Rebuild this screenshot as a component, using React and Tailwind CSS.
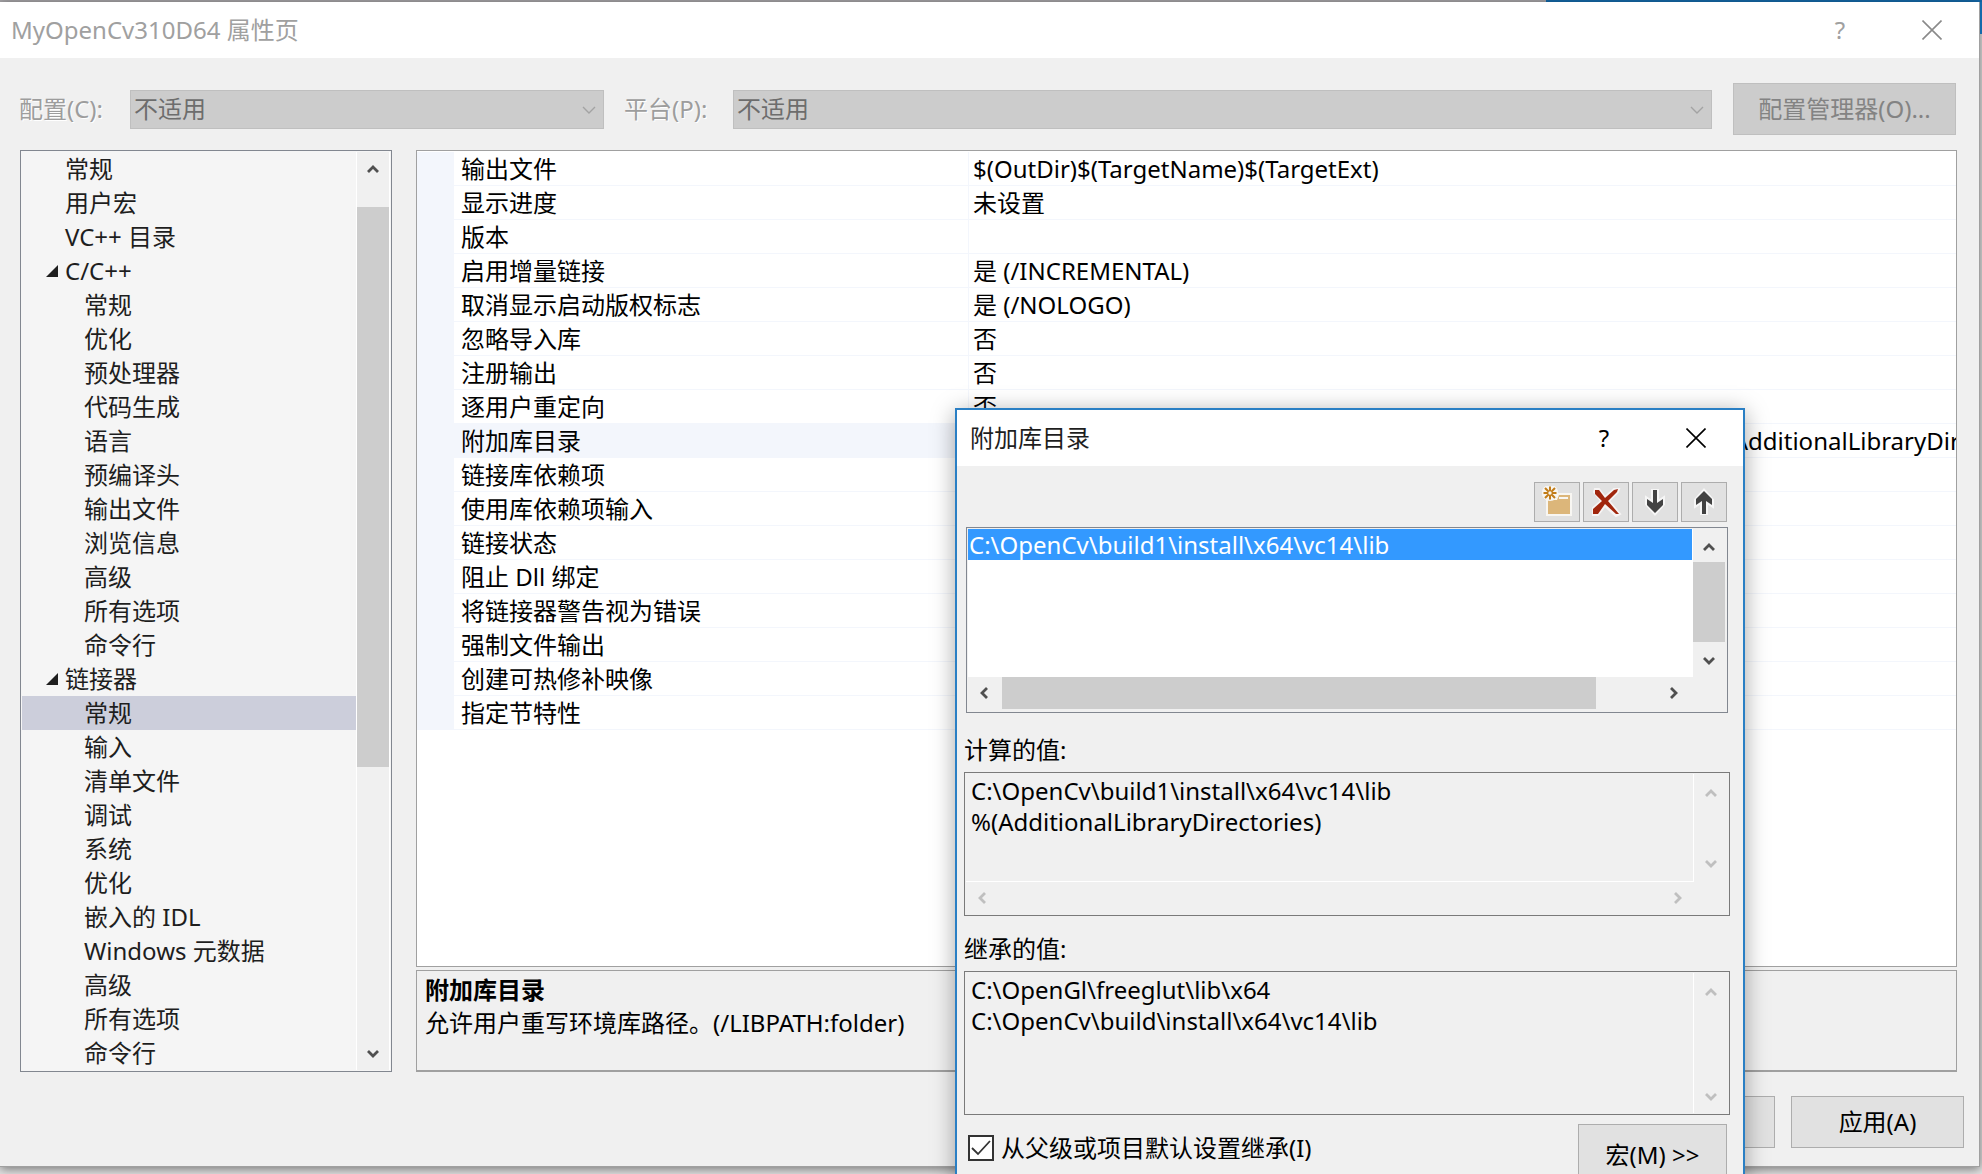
import { useState } from 'react';
import clsx from 'clsx';

const treeItems = [
  { label: '常规', level: 1 },
  { label: '用户宏', level: 1 },
  { label: 'VC++ 目录', level: 1 },
  { label: 'C/C++', level: 1, expanded: true },
  { label: '常规', level: 2 },
  { label: '优化', level: 2 },
  { label: '预处理器', level: 2 },
  { label: '代码生成', level: 2 },
  { label: '语言', level: 2 },
  { label: '预编译头', level: 2 },
  { label: '输出文件', level: 2 },
  { label: '浏览信息', level: 2 },
  { label: '高级', level: 2 },
  { label: '所有选项', level: 2 },
  { label: '命令行', level: 2 },
  { label: '链接器', level: 1, expanded: true },
  { label: '常规', level: 2, selected: true },
  { label: '输入', level: 2 },
  { label: '清单文件', level: 2 },
  { label: '调试', level: 2 },
  { label: '系统', level: 2 },
  { label: '优化', level: 2 },
  { label: '嵌入的 IDL', level: 2 },
  { label: 'Windows 元数据', level: 2 },
  { label: '高级', level: 2 },
  { label: '所有选项', level: 2 },
  { label: '命令行', level: 2 },
];

const properties = [
  { name: '输出文件', value: '$(OutDir)$(TargetName)$(TargetExt)' },
  { name: '显示进度', value: '未设置' },
  { name: '版本', value: '' },
  { name: '启用增量链接', value: '是 (/INCREMENTAL)' },
  { name: '取消显示启动版权标志', value: '是 (/NOLOGO)' },
  { name: '忽略导入库', value: '否' },
  { name: '注册输出', value: '否' },
  { name: '逐用户重定向', value: '否' },
  {
    name: '附加库目录',
    value: 'C:\\OpenCv\\build1\\install\\x64\\vc14\\lib;C:\\OpenGl\\freeglut\\lib\\x64;%(AdditionalLibraryDirectories)',
    active: true,
  },
  { name: '链接库依赖项', value: '' },
  { name: '使用库依赖项输入', value: '' },
  { name: '链接状态', value: '' },
  { name: '阻止 Dll 绑定', value: '' },
  { name: '将链接器警告视为错误', value: '' },
  { name: '强制文件输出', value: '' },
  { name: '创建可热修补映像', value: '' },
  { name: '指定节特性', value: '' },
];

const arrowPaths = {
  up: 'M1 10 L6 5 L11 10',
  down: 'M1 3 L6 8 L11 3',
  left: 'M9 1 L4 6 L9 11',
  right: 'M3 1 L8 6 L3 11',
};

const ScrollArrow = ({ dir, label, disabled }) => (
  <button
    type="button"
    aria-label={label}
    disabled={disabled}
    className={clsx('flex size-8 shrink-0 items-center justify-center', disabled ? 'text-[#bfbfbf]' : 'text-[#505050]')}
  >
    <svg viewBox="0 0 12 12" width="12" height="12" fill="none" stroke="currentColor" strokeWidth="2.8">
      <path d={arrowPaths[dir]} />
    </svg>
  </button>
);

const ThinChevron = () => (
  <svg
    viewBox="0 0 14 8"
    width="14"
    height="8"
    fill="none"
    stroke="#a3a3a3"
    strokeWidth="1.4"
    className="pointer-events-none absolute top-4 right-2"
  >
    <path d="M1 1 L7 7 L13 1" />
  </svg>
);

const CloseIcon = () => (
  <svg viewBox="0 0 20 20" width="20" height="20" fill="none" stroke="currentColor" strokeWidth="1.6">
    <path d="M0.5 0.5 L19.5 19.5 M19.5 0.5 L0.5 19.5" />
  </svg>
);

const NewFolderIcon = () => (
  <svg viewBox="0 0 32 32" width="32" height="32">
    <path d="M5 12 H16 V7 H31 V30 H5 Z" fill="#f8f6f2" />
    <circle cx="9" cy="7" r="8" fill="#f8f6f2" />
    <path d="M7 14 H16 L18 9 H29 V28 H7 Z" fill="#dcb67a" />
    <path d="M18 12 H27" stroke="#f8f6f2" strokeWidth="2" />
    <circle cx="9" cy="7" r="8" fill="#f8f6f2" />
    <path
      d="M9 0.5 V4.5 M9 9.5 V13.5 M2.5 7 H6.5 M11.5 7 H15.5 M4 2 L7 5 M14 2 L11 5 M4 12 L7 9 M14 12 L11 9"
      stroke="#c27d1a"
      strokeWidth="2"
    />
    <circle cx="9" cy="7" r="2.4" fill="none" stroke="#c27d1a" strokeWidth="1.4" />
  </svg>
);

const DeleteIcon = () => (
  <svg viewBox="0 0 32 32" width="32" height="32">
    <path
      d="M5 3 L9 3 L15 11 L24 3 L29 3 L28 6 L19 15 L30 28 L26 30 L15 20 L8 29 L3 29 L3 22 L11 15 L4 6 Z"
      fill="#f6f4f4"
      stroke="#f6f4f4"
      strokeWidth="2"
    />
    <path d="M5 4 L9 4 L15 12 L24 4 L28 3 L27 6 L18 15 L29 28 L26 28 L15 18 L8 28 L3 28 L3 23 L12 15 L5 8 Z" fill="#a1260d" />
  </svg>
);

const MoveIcon = ({ up }) => (
  <svg viewBox="0 0 32 32" width="32" height="32" className={up ? 'rotate-180' : ''}>
    <path
      d="M14 5 H18 V17 L24 13 V18 L16 27 L8 18 V13 L14 17 Z"
      fill="#f6f6f6"
      stroke="#f6f6f6"
      strokeWidth="4"
    />
    <path d="M14 4 H18 V17 L24 13 V19 L16 27 L8 19 V13 L14 17 Z" fill="#424242" />
  </svg>
);

const toolButtons = [
  { label: '新行', icon: <NewFolderIcon /> },
  { label: '删除', icon: <DeleteIcon /> },
  { label: '下移', icon: <MoveIcon /> },
  { label: '上移', icon: <MoveIcon up /> },
];

function DisabledSelect({ id, className }) {
  return (
    <div className={clsx('relative', className)}>
      <select
        id={id}
        disabled
        className="h-[39px] w-full appearance-none border border-[#bfbfbf] bg-[#cccccc] pl-[3px] text-[#6d6d6d] opacity-100"
      >
        <option>不适用</option>
      </select>
      <ThinChevron />
    </div>
  );
}

function ConfigBar() {
  return (
    <div className="flex items-center pr-[23px] pl-[19px]">
      <label htmlFor="config" className="w-[111px] text-[#9d9d9d] [text-shadow:1px_1px_0_#fff]">
        配置(C):
      </label>
      <DisabledSelect id="config" className="w-[474px]" />
      <label htmlFor="platform" className="ml-5 w-[109px] text-[#9d9d9d] [text-shadow:1px_1px_0_#fff]">
        平台(P):
      </label>
      <DisabledSelect id="platform" className="min-w-0 flex-1" />
      <button
        type="button"
        disabled
        className="ml-[21px] h-[52px] w-[223px] border border-[#bfbfbf] bg-[#cccccc] text-[#838383]"
      >
        配置管理器(O)...
      </button>
    </div>
  );
}

function PageTree() {
  return (
    <nav className="flex w-[372px] shrink-0 border border-[#828790] bg-[#f5f5f5] p-px" aria-label="属性页">
      <ul role="tree" className="min-w-0 flex-1 text-[#1e1e1e]">
        {treeItems.map((item, i) => (
          <li
            key={i}
            role="treeitem"
            aria-level={item.level}
            aria-selected={!!item.selected}
            className={clsx(
              'flex h-[34px] items-center',
              item.level === 1 ? 'pl-6' : 'pl-[62px]',
              item.selected && 'bg-[#cccedb]'
            )}
          >
            {item.level === 1 && (
              <span className="w-[19px]">
                {item.expanded && (
                  <svg viewBox="0 0 12 12" width="12" height="12" fill="#1e1e1e">
                    <path d="M12 0 V12 H0 Z" />
                  </svg>
                )}
              </span>
            )}
            {item.label}
          </li>
        ))}
      </ul>
      <div className="flex w-[34px] flex-col border-x border-white bg-[#f0f0f0]">
        <ScrollArrow dir="up" label="向上滚动" />
        <div className="mt-[23px] h-[560px] bg-[#cdcdcd]" />
        <div className="flex-1" />
        <ScrollArrow dir="down" label="向下滚动" />
      </div>
    </nav>
  );
}

function PropertyGrid() {
  return (
    <div className="flex-1 overflow-hidden border border-[#a0a0a0] bg-white pt-px text-black">
      <table className="w-full table-fixed border-separate border-spacing-0 leading-[33px]">
        <colgroup>
          <col className="w-[37px]" />
          <col className="w-[515px]" />
          <col />
        </colgroup>
        <tbody>
          {properties.map((p) => (
            <tr key={p.name} className="h-[34px]">
              <td className="bg-[#f3f6fc] p-0" />
              <th
                scope="row"
                className={clsx(
                  'border-r border-b border-[#f3f6fc] p-0 pl-[7px] text-left font-normal whitespace-nowrap',
                  p.active && 'bg-[#f3f6fc]'
                )}
              >
                {p.name}
              </th>
              <td className="overflow-hidden border-b border-[#f3f6fc] p-0 pl-1 whitespace-nowrap">{p.value}</td>
            </tr>
          ))}
        </tbody>
      </table>
    </div>
  );
}

function ValueBox({ id, label, value, horizontal }) {
  return (
    <div className="flex flex-col">
      <label htmlFor={id} className="flex h-11 items-center">
        {label}
      </label>
      <div className="flex h-36 border border-[#7a7a7a] p-px">
        <div className="flex min-w-0 flex-1 flex-col">
          <textarea
            id={id}
            readOnly
            wrap="off"
            value={value}
            className="min-h-0 flex-1 resize-none overflow-hidden border-r border-white px-[5px] pt-px leading-[31px] outline-none"
          />
          {horizontal && (
            <div className="flex justify-between border-t border-white">
              <ScrollArrow dir="left" label="向左滚动" disabled />
              <ScrollArrow dir="right" label="向右滚动" disabled />
            </div>
          )}
        </div>
        <div className={clsx('flex w-[34px] flex-col items-center justify-between pt-0.5', horizontal && 'pb-[34px]')}>
          <ScrollArrow dir="up" label="向上滚动" disabled />
          <ScrollArrow dir="down" label="向下滚动" disabled />
        </div>
      </div>
    </div>
  );
}

function DirectoriesDialog() {
  const [inherit, setInherit] = useState(true);

  return (
    <section
      role="dialog"
      aria-label="附加库目录"
      className="absolute top-[408px] left-[955px] w-[790px] border-2 border-[#2a7fc4] bg-[#f0f0f0] text-black shadow-[0_4px_22px_rgba(0,0,0,0.35)]"
    >
      <header className="flex h-14 items-center bg-white pl-[13px]">
        <h2 className="flex-1 text-[#1e1e1e]">附加库目录</h2>
        <button type="button" aria-label="帮助" className="w-[90px]">
          ?
        </button>
        <button type="button" aria-label="关闭" className="flex w-[94px] justify-center">
          <CloseIcon />
        </button>
      </header>

      <div className="px-[7px] pt-4">
        <div className="flex justify-end gap-[3px] pr-[9px]">
          {toolButtons.map((b) => (
            <button
              key={b.label}
              type="button"
              aria-label={b.label}
              className="flex h-10 w-[46px] items-center justify-center border border-[#adadad] bg-[#e1e1e1]"
            >
              {b.icon}
            </button>
          ))}
        </div>

        {/* Editable directory list */}
        <div className="mt-[5px] mr-2 ml-[2px] flex h-[186px] flex-col border border-[#828790] bg-[#f0f0f0] p-px">
          <div className="flex flex-1">
            <ul role="listbox" aria-label="目录" className="min-w-0 flex-1 border-r border-white bg-white">
              <li role="option" aria-selected="true" className="h-[31px] bg-[#3399ff] pl-px leading-[31px] text-white">
                {'C:\\OpenCv\\build1\\install\\x64\\vc14\\lib'}
              </li>
            </ul>
            <div className="flex w-[33px] flex-col">
              <div className="flex h-[33px] items-center">
                <ScrollArrow dir="up" label="向上滚动" />
              </div>
              <div className="mr-px h-20 bg-[#cdcdcd]" />
              <div className="flex-1" />
              <ScrollArrow dir="down" label="向下滚动" />
            </div>
          </div>
          <div className="flex h-[34px] items-start pr-9">
            <ScrollArrow dir="left" label="向左滚动" />
            <div className="ml-0.5 h-8 w-[594px] bg-[#cdcdcd]" />
            <div className="flex-1" />
            <ScrollArrow dir="right" label="向右滚动" />
          </div>
        </div>

        <div className="mt-[15px] mr-[6px] flex flex-col gap-[11px]">
          <ValueBox
            id="evaluated"
            label="计算的值:"
            value={'C:\\OpenCv\\build1\\install\\x64\\vc14\\lib\n%(AdditionalLibraryDirectories)'}
            horizontal
          />
          <ValueBox
            id="inherited"
            label="继承的值:"
            value={'C:\\OpenGl\\freeglut\\lib\\x64\nC:\\OpenCv\\build\\install\\x64\\vc14\\lib'}
          />
        </div>

        <div className="mt-2 flex items-start justify-between pr-[9px] pl-1">
          <label className="flex h-[50px] items-center gap-[7px]">
            <span className="relative flex size-[26px]">
              <input
                type="checkbox"
                checked={inherit}
                onChange={(e) => setInherit(e.target.checked)}
                className="size-[26px] appearance-none border-2 border-[#333333] bg-white"
              />
              {inherit && (
                <svg
                  viewBox="0 0 26 26"
                  width="26"
                  height="26"
                  fill="none"
                  stroke="#333333"
                  strokeWidth="1.8"
                  className="pointer-events-none absolute inset-0"
                >
                  <path d="M4 13 L10 19 L22 6" />
                </svg>
              )}
            </span>
            从父级或项目默认设置继承(I)
          </label>
          <button type="button" className="mt-px h-[62px] w-[149px] border border-[#adadad] bg-[#e1e1e1]">
            宏(M) &gt;&gt;
          </button>
        </div>
      </div>
    </section>
  );
}

export default function App() {
  return (
    <div className="relative flex h-screen flex-col overflow-hidden bg-[#e4e4e4] font-['Noto_Sans','Noto_Sans_CJK_SC',sans-serif] text-[24px] leading-[34px]">
      <div className="flex h-0.5 shrink-0 bg-[#a8a6a9]">
        <div className="ml-auto w-[436px] bg-[#146aab]" />
      </div>

      <div className="flex flex-1">
        <main className="flex min-w-0 flex-1 flex-col border-r border-b border-[#a0a0a0] bg-[#f0f0f0] shadow-[0_2px_10px_rgba(0,0,0,0.5)]">
          <header className="flex h-14 items-center bg-white pl-[11px] text-[#a0a0a0]">
            <h1 className="flex-1">MyOpenCv310D64 属性页</h1>
            <button type="button" aria-label="帮助" className="w-[90px]">
              ?
            </button>
            <button type="button" aria-label="关闭" className="flex w-[94px] justify-center text-[#8a8a8a]">
              <CloseIcon />
            </button>
          </header>

          <div className="pt-[25px]">
            <ConfigBar />
          </div>

          <div className="mt-[15px] flex pr-[22px] pl-5">
            <PageTree />
            <div className="ml-6 flex min-w-0 flex-1 flex-col gap-[3px]">
              <PropertyGrid />
              <div className="h-[102px] border border-b-2 border-[#a0a0a0] px-2 pt-0.5 leading-[33px] text-black">
                <h3 className="font-bold">附加库目录</h3>
                <p>允许用户重写环境库路径。(/LIBPATH:folder)</p>
              </div>
            </div>
          </div>

          <div className="mt-6 flex justify-end gap-4 pr-[15px] text-black">
            <button type="button" className="h-[52px] w-[173px] border border-[#adadad] bg-[#e1e1e1]">
              取消
            </button>
            <button type="button" className="h-[52px] w-[173px] border border-[#adadad] bg-[#e1e1e1]">
              应用(A)
            </button>
          </div>
        </main>
        <div className="w-0.5 shrink-0">
          <div className="h-8 bg-[#146aab]" />
        </div>
      </div>
      <div className="h-[7px] shrink-0" />

      <DirectoriesDialog />
    </div>
  );
}
